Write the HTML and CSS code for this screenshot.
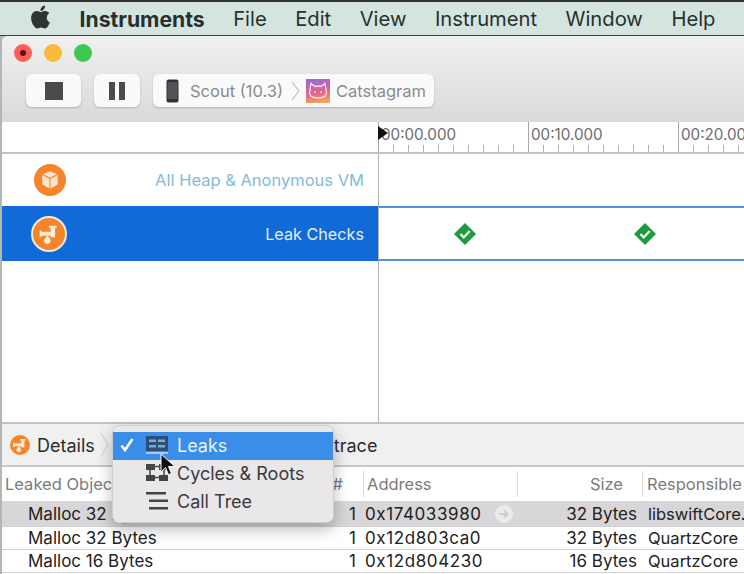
FILE: index.html
```html
<!DOCTYPE html>
<html lang="en">
<head>
    <meta charset="UTF-8">
    <title>Instruments</title>
    <link rel="stylesheet" href="styles.css">
</head>
<body>

    <header class="menubar">
        <svg class="apple" viewBox="0 0 24 24"><path d="M12.152 6.896c-.948 0-2.415-1.078-3.96-1.04-2.04.027-3.91 1.183-4.961 3.014-2.117 3.675-.546 9.103 1.519 12.09 1.013 1.454 2.208 3.09 3.792 3.039 1.52-.065 2.09-.987 3.935-.987 1.831 0 2.35.987 3.96.948 1.637-.026 2.676-1.48 3.676-2.948 1.156-1.688 1.636-3.325 1.662-3.415-.039-.013-3.182-1.221-3.22-4.857-.026-3.04 2.48-4.494 2.597-4.559-1.429-2.09-3.623-2.324-4.39-2.376-2-.156-3.675 1.09-4.61 1.09zM15.53 3.83c.843-1.012 1.4-2.427 1.245-3.83-1.207.052-2.662.805-3.532 1.818-.78.896-1.454 2.338-1.273 3.714 1.338.104 2.715-.688 3.559-1.701"/></svg>
        <span class="menu-app">Instruments</span>
        <span>File</span>
        <span>Edit</span>
        <span>View</span>
        <span>Instrument</span>
        <span>Window</span>
        <span>Help</span>
    </header>

    <main class="window">
        <section class="toolbar">
            <div class="lights">
                <span class="light red"><i></i></span>
                <span class="light yellow"></span>
                <span class="light green"></span>
            </div>
            <div class="controls">
                <button class="btn btn-stop"><span class="stop-icon"></span></button>
                <button class="btn btn-pause"><span class="pause-icon"></span><span class="pause-icon"></span></button>
                <div class="btn path">
                    <svg class="phone" viewBox="0 0 13 24">
                        <rect x="0.5" y="0.5" width="12" height="23" rx="2" fill="#333"/>
                        <rect x="1.5" y="3" width="10" height="17" fill="#55535a"/>
                    </svg>
                    <span class="path-device">Scout (10.3)</span>
                    <svg class="path-sep" viewBox="0 0 9 20"><path d="M1 1l7 9-7 9" fill="none" stroke="#aaa" stroke-width="1"/></svg>
                    <span class="cat-icon">
                        <svg viewBox="0 0 24 24"><path d="M5 4.500l4 3q3-1 6 0l4-3 1.500 9q0 5.500-8.500 5.500t-8.500-5.500z" fill="none" stroke="#f6e6f0" stroke-width="1.400"/><circle cx="9" cy="13" r="1" fill="#f6e6f0"/><circle cx="15" cy="13" r="1" fill="#f6e6f0"/></svg>
                    </span>
                    <span class="path-app">Catstagram</span>
                </div>
            </div>
        </section>

        <section class="ruler-row">
            <div class="ruler-side"></div>
            <div class="ruler">
                <div class="ruler-seg"><span>00:00.000</span></div>
                <div class="ruler-seg"><span>00:10.000</span></div>
                <div class="ruler-seg"><span>00:20.000</span></div>
                <svg class="playhead" viewBox="0 0 10 16"><path d="M0 0l10 7-10 7z" fill="#111"/></svg>
            </div>
        </section>

        <section class="tracks">
            <div class="track">
                <div class="track-label">
                    <span class="badge">
                        <svg viewBox="0 0 20 20"><path d="M10 2l7 3v9l-7 4-7-4V5z" fill="#fbe3cc"/><path d="M3 5l7 3.500 7-3.500M10 8.500V18" fill="none" stroke="#f5852a" stroke-width="1"/></svg>
                    </span>
                    <span class="track-name">All Heap &amp; Anonymous VM</span>
                </div>
                <div class="track-graph"></div>
            </div>
            <div class="track track-selected">
                <div class="track-label">
                    <span class="badge badge-ring">
                        <svg viewBox="0 0 20 20"><use href="#pipe"/></svg>
                    </span>
                    <span class="track-name">Leak Checks</span>
                </div>
                <div class="track-graph">
                    <svg class="check check-a" viewBox="0 0 22 22"><path d="M11 0l11 11-11 11L0 11z" fill="#1f9a3c"/><path d="M6.500 11l3.200 3.400 6-6.400" fill="none" stroke="#fff" stroke-width="2.200"/></svg>
                    <svg class="check check-b" viewBox="0 0 22 22"><path d="M11 0l11 11-11 11L0 11z" fill="#1f9a3c"/><path d="M6.500 11l3.200 3.400 6-6.400" fill="none" stroke="#fff" stroke-width="2.200"/></svg>
                </div>
            </div>
            <div class="track track-empty">
                <div class="track-label"></div>
                <div class="track-graph"></div>
            </div>
        </section>

        <section class="details">
            <span class="badge badge-small">
                <svg viewBox="0 0 20 20">
                    <g id="pipe" fill="#fdeedd">
                        <rect x="3" y="8" width="9" height="3.500"/>
                        <rect x="1.500" y="7" width="1.800" height="5.500"/>
                        <rect x="11.500" y="4" width="4" height="9"/>
                        <rect x="10" y="2.500" width="7" height="2"/>
                        <path d="M8.500 11.500q3 3 3 4.500a3 3 0 0 1-6 0q0-1.500 3-4.500z"/>
                    </g>
                </svg>
            </span>
            <span class="details-name">Details</span>
            <svg class="details-sep" viewBox="0 0 9 26"><path d="M1 1l7 12-7 12" fill="none" stroke="#ccc" stroke-width="1"/></svg>
            <span class="details-crumb">Backtrace</span>
        </section>

        <section class="table">
            <div class="row row-head">
                <div class="cell col-name">Leaked Object</div>
                <div class="cell col-count">#</div>
                <div class="cell col-addr">Address</div>
                <div class="cell col-size">Size</div>
                <div class="cell col-resp">Responsible</div>
            </div>
            <div class="row row-active">
                <div class="cell col-name">Malloc 32 Bytes</div>
                <div class="cell col-count">1</div>
                <div class="cell col-addr">0x174033980
                    <span class="goto"><svg viewBox="0 0 18 18"><path d="M4 9h8M9 5.500L12.500 9 9 12.500" fill="none" stroke="#cfcdcf" stroke-width="2"/></svg></span>
                </div>
                <div class="cell col-size">32 Bytes</div>
                <div class="cell col-resp">libswiftCore.</div>
            </div>
            <div class="row">
                <div class="cell col-name">Malloc 32 Bytes</div>
                <div class="cell col-count">1</div>
                <div class="cell col-addr">0x12d803ca0</div>
                <div class="cell col-size">32 Bytes</div>
                <div class="cell col-resp">QuartzCore</div>
            </div>
            <div class="row">
                <div class="cell col-name">Malloc 16 Bytes</div>
                <div class="cell col-count">1</div>
                <div class="cell col-addr">0x12d804230</div>
                <div class="cell col-size">16 Bytes</div>
                <div class="cell col-resp">QuartzCore</div>
            </div>
        </section>
    </main>

    <div class="popup">
        <div class="popup-item popup-on">
            <svg class="popup-check" viewBox="0 0 14 14"><path d="M1.500 7.500l3.500 4.500 7.500-11" fill="none" stroke="#fff" stroke-width="2.600"/></svg>
            <svg class="popup-icon" viewBox="0 0 22 18">
                <rect width="22" height="15" fill="#2c4f78"/>
                <path d="M3 3.500h7v2.500H3zM12 3.500h7v2.500h-7zM3 9h7v2.500H3zM12 9h7v2.500h-7z" fill="#7fa9d4"/>
                <rect y="16" width="22" height="2" fill="#a8c8ec"/>
            </svg>
            <span>Leaks</span>
        </div>
        <div class="popup-item">
            <span class="popup-check"></span>
            <svg class="popup-icon" viewBox="0 0 22 18" fill="#444">
                <path d="M0 0h9v6H0zM13 0h9v6h-9zM0 11h9v6H0zM13 11h9v6h-9z"/>
                <path d="M9 2.500h4M4 6v5M18 6v5M9 13.500h4" stroke="#444" stroke-width="1.500"/>
            </svg>
            <span>Cycles &amp; Roots</span>
        </div>
        <div class="popup-item">
            <span class="popup-check"></span>
            <svg class="popup-icon" viewBox="0 0 22 18" fill="#444">
                <path d="M0 0h20v2.500H0zM3 7.500h19V10H3zM3 15h19v2.500H3z"/>
            </svg>
            <span>Call Tree</span>
        </div>
    </div>

    <svg class="cursor" viewBox="0 0 16 24"><path d="M1 1v18l4.500-4.300 3 7 3-1.300-3-6.800H15z" fill="#111" stroke="#fff" stroke-width="1"/></svg>

</body>
</html>
```

FILE: styles.css
```css
* {
    box-sizing: border-box;
}
html, body {
    height: 100%;
}
body {
    font-family: Inter, "Liberation Sans", sans-serif;
    margin: 0;
    width: 744px;
    height: 574px;
    overflow: hidden;
    background-color: #b5b5b5;
    color: #2b2b2b;
    display: flex;
    flex-direction: column;
}

/* menu bar */
.menubar {
    flex: none;
    height: 36px;
    padding-left: 29px;
    display: flex;
    align-items: center;
    gap: 28.5px;
    background-color: #d6e4e0;
    border-top: 2px solid #333;
    border-bottom: 1px solid #3a4240;
    font-size: 20.2px;
    color: #26302e;
}
.apple {
    width: 23px;
    height: 24px;
    margin-top: -4px;
    margin-right: -1px;
    fill: #2c3533;
}
.menu-app {
    font-size: 21.2px;
    font-weight: 700;
}

/* window */
.window {
    flex: 1;
    margin-left: 2px;
    border-radius: 6px 0 0 0;
    overflow: hidden;
    display: flex;
    flex-direction: column;
    background-color: #fff;
}
.toolbar {
    flex: none;
    height: 86px;
    padding: 8px 0 0 12px;
    background: linear-gradient(#f1f0f1, #dad9da);
}
.lights {
    display: flex;
    gap: 12px;
}
.light {
    width: 18px;
    height: 18px;
    border-radius: 50%;
    display: flex;
    align-items: center;
    justify-content: center;
}
.light i {
    width: 6px;
    height: 6px;
    border-radius: 50%;
    background-color: #6e0b10;
}
.red { background-color: #f9605a; }
.yellow { background-color: #fbb93a; }
.green { background-color: #3bc84c; }

.controls {
    margin-top: 12px;
    margin-left: 12px;
    display: flex;
    gap: 13px;
}
.btn {
    height: 33px;
    padding: 0;
    border: none;
    border-radius: 6px;
    background-color: #fbfafb;
    box-shadow: 0 1px 2px rgba(0, 0, 0, 0.2);
    display: flex;
    align-items: center;
    justify-content: center;
}
.btn-stop {
    width: 55px;
}
.stop-icon {
    width: 18px;
    height: 18px;
    background-color: #4c4b4c;
}
.btn-pause {
    width: 46px;
    gap: 4px;
}
.pause-icon {
    width: 6px;
    height: 18px;
    background-color: #4c4b4c;
}
.path {
    width: 281px;
    padding-left: 13px;
    justify-content: flex-start;
    font-size: 16.5px;
    color: #8b8a8c;
}
.phone {
    width: 13px;
    height: 24px;
}
.path-device {
    margin-left: 11px;
}
.path-sep {
    width: 9px;
    height: 20px;
    margin-left: 8px;
}
.cat-icon {
    width: 24px;
    height: 24px;
    margin-left: 6px;
    background: linear-gradient(170deg, #8d6fd8, #e8608c 55%, #f6b24f);
}
.cat-icon svg {
    display: block;
}
.path-app {
    margin-left: 6px;
}

/* ruler */
.ruler-row {
    flex: none;
    height: 32px;
    display: flex;
    border-bottom: 2px solid #c4c3c4;
}
.ruler-side {
    width: 376px;
}
.ruler {
    flex: 1;
    display: flex;
    position: relative;
    overflow: hidden;
}
.ruler-seg {
    flex: none;
    width: 150px;
    padding: 3px 0 0 2px;
    border-left: 1px solid #a9a8a9;
    font-size: 15.2px;
    line-height: 20px;
    color: #6d6c6e;
    background-image: repeating-linear-gradient(90deg, transparent 0 14px, #b5b4b5 14px 15px);
    background-size: 100% 7px;
    background-position: 0 bottom;
    background-repeat: no-repeat;
    white-space: nowrap;
}
.playhead {
    position: absolute;
    left: 0;
    top: 4px;
    width: 10px;
    height: 16px;
}

/* tracks */
.tracks {
    flex: none;
    height: 270px;
    display: flex;
    flex-direction: column;
    border-bottom: 2px solid #c4c3c4;
}
.track {
    flex: none;
    height: 52px;
    display: flex;
}
.track-label {
    flex: none;
    width: 376px;
    padding: 0 14px 0 32px;
    display: flex;
    align-items: center;
    justify-content: space-between;
    font-size: 16.5px;
    color: #82bbe0;
}
.track-graph {
    flex: 1;
    position: relative;
    border-left: 1px solid #b5b4b5;
}
.track-selected {
    height: 55px;
}
.track-selected .track-label {
    padding-left: 29px;
    background-color: #1269d8;
    color: #e3eefb;
}
.track-selected .track-name {
    font-size: 16.2px;
}
.track-selected .track-graph {
    border-top: 2px solid #4f93e0;
    border-bottom: 2px solid #4f93e0;
}
.track-empty {
    flex: 1;
}
.badge {
    flex: none;
    width: 32px;
    height: 32px;
    border-radius: 50%;
    background-color: #f5852a;
    display: flex;
    align-items: center;
    justify-content: center;
}
.badge svg {
    width: 22px;
    height: 22px;
}
.badge-ring {
    width: 36px;
    height: 36px;
    border: 2px solid #f4e9df;
}
.badge-small {
    width: 20px;
    height: 20px;
}
.badge-small svg {
    width: 16px;
    height: 16px;
}
.check {
    position: absolute;
    top: 15px;
    width: 22px;
    height: 22px;
}
.check-a { left: 75px; }
.check-b { left: 255px; }

/* details bar */
.details {
    flex: none;
    height: 43px;
    padding: 1px 0 0 8px;
    display: flex;
    align-items: center;
    background-color: #f1f0f1;
    border-bottom: 2px solid #c9c8c9;
    font-size: 18px;
    color: #2b2b2b;
}
.details-name {
    margin-left: 7px;
}
.details-sep {
    width: 9px;
    height: 26px;
    margin-left: 5px;
}
.details-crumb {
    margin-left: 183px;
}

/* table */
.table {
    flex: 1;
    font-size: 17px;
}
.row {
    height: 23px;
    display: flex;
    align-items: center;
    border-bottom: 1px solid #d2d1d2;
    color: #222;
}
.row-head {
    height: 34px;
    border-bottom: none;
    font-size: 16.5px;
    color: #7c7b7d;
}
.row-active {
    height: 26px;
    background-color: #d8d6d8;
}
.cell {
    flex: none;
    white-space: nowrap;
}
.col-name {
    width: 328px;
    padding-left: 26px;
}
.row-head .col-name {
    padding-left: 3px;
}
.col-count {
    width: 26px;
    text-align: right;
}
.col-addr {
    width: 163px;
    padding-left: 9px;
    display: flex;
    align-items: center;
    gap: 13px;
    letter-spacing: 0.6px;
}
.col-size {
    width: 118px;
    text-align: right;
}
.col-resp {
    padding-left: 11px;
    font-size: 16.5px;
}
.row-head .col-count {
    width: 13px;
    margin-right: 20px;
}
.row-head .col-size {
    width: 105px;
    margin-right: 19px;
}
.row-head .col-addr {
    width: 155px;
    height: 26px;
    border-left: 1px solid #dddcdd;
    border-right: 1px solid #dddcdd;
    padding-left: 3px;
    letter-spacing: 0;
}
.row-head .col-resp {
    height: 26px;
    line-height: 26px;
    border-left: 1px solid #dddcdd;
    padding-left: 4px;
}
.goto {
    width: 18px;
    height: 18px;
    border-radius: 50%;
    background-color: #eceaec;
}
.goto svg {
    display: block;
}

/* popup menu */
.popup {
    position: absolute;
    left: 112px;
    top: 425px;
    width: 222px;
    height: 98px;
    padding-top: 6px;
    border-radius: 7px;
    background-color: #e9e7e9;
    border: 1px solid #cfcdcf;
    box-shadow: 0 6px 16px rgba(0, 0, 0, 0.28);
    font-size: 18px;
    color: #3b3b3d;
}
.popup-item {
    height: 28px;
    padding: 0 0 2px 7px;
    display: flex;
    align-items: center;
}
.popup-on {
    background-color: #3b8ee8;
    color: #e8f2fd;
}
.popup-check {
    flex: none;
    width: 14px;
    height: 14px;
    margin-right: 12px;
}
.popup-icon {
    width: 22px;
    height: 18px;
    margin-right: 9px;
}
.cursor {
    position: absolute;
    left: 160px;
    top: 453px;
    width: 16px;
    height: 24px;
}
```
